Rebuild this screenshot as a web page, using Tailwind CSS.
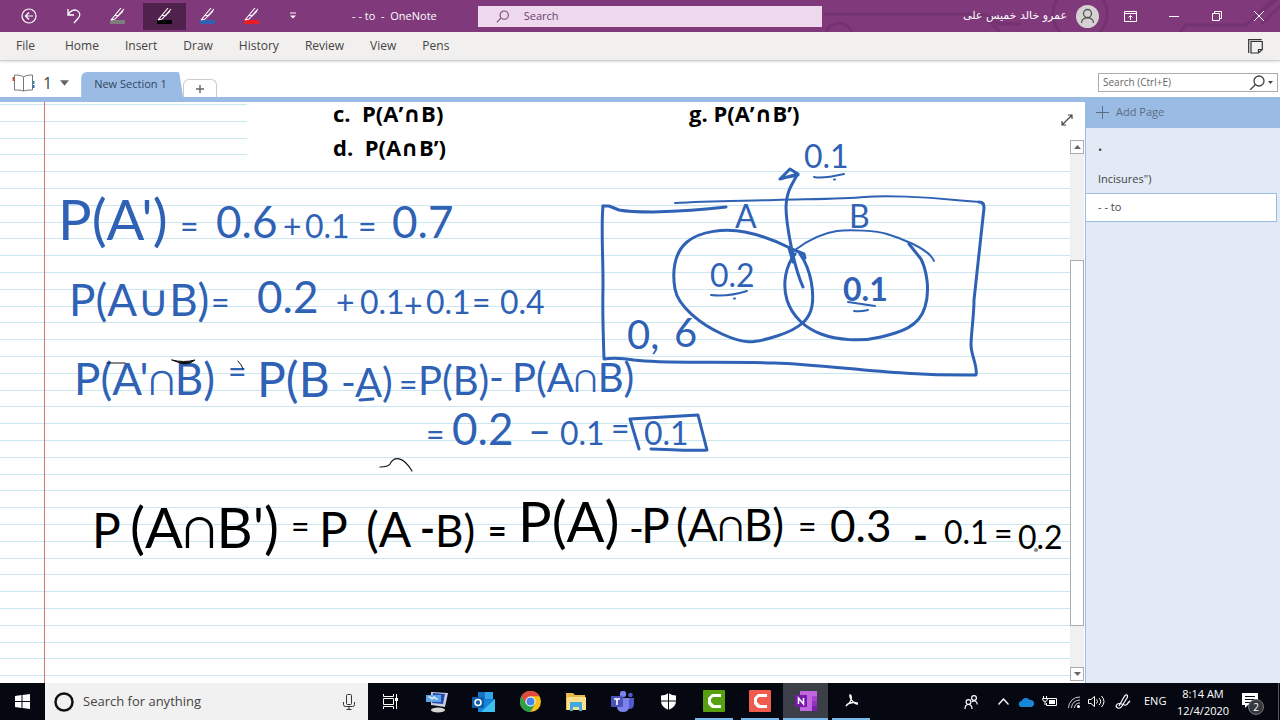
<!DOCTYPE html>
<html lang="en">
  <head>
    <meta charset="UTF-8" />
    <meta name="viewport" content="width=device-width, initial-scale=1.0" />
    <title>- - to - OneNote</title>
    <script src="https://cdn.jsdelivr.net/npm/@tailwindcss/browser@4"></script>
  </head>
  <body class="h-screen flex flex-col overflow-hidden bg-white font-['Open_Sans',sans-serif] text-[12px] text-[#444]">
    <!-- Title bar -->
    <header class="relative h-8 shrink-0 flex items-center bg-[#80397b] text-white">
      <svg class="absolute right-0 top-0 w-[480px] h-8" viewBox="800 0 480 32" fill="none" stroke="#733270" stroke-width="3" aria-hidden="true">
        <path d="M824 14H985l14 10h22M826 32a14 14 0 0 1 26 0M1000 32l-14-14M1180 32l6-7h60l30-25M1252 20l20-20M1262 24l18-18" />
        <circle cx="1080" cy="14" r="27" />
      </svg>
      <nav class="relative flex items-center h-full" aria-label="Quick access">
        <button class="w-[58px] h-7 grid place-items-center" aria-label="Back">
          <svg class="w-4 h-4" viewBox="0 0 16 16" fill="none" stroke="#fff" stroke-width="1.2"><circle cx="8" cy="8" r="7" /><path d="M12 8H4.500M8 4.500L4.500 8L8 11.500" /></svg>
        </button>
        <button class="w-8 h-7 grid place-items-center" aria-label="Undo">
          <svg class="w-4 h-4" viewBox="0 0 16 16" fill="none" stroke="#fff" stroke-width="1.3"><path d="M2 1v6h6M2 7C4 3 8 1 11 2.500s4 5 1 8L8 15" /></svg>
        </button>
        <button class="w-[51px] h-7 ml-[2px] grid place-items-center" aria-label="Gray pen">
          <svg class="w-4 h-4" viewBox="0 0 16 16" fill="none" stroke="#fff" stroke-width="1.1"><rect x="0" y="12" width="15" height="4" fill="#7d7d7d" stroke="none" /><path d="M1 12L11 0M1 12l4-1L14 1M5 7l3 1l5-5" /></svg>
        </button>
        <button class="w-[43px] h-[27px] grid place-items-center bg-[#4f214c]" aria-label="Black pen">
          <svg class="w-4 h-4" viewBox="0 0 16 16" fill="none" stroke="#fff" stroke-width="1.1"><rect x="0" y="12" width="15" height="4" fill="#000" stroke="none" /><path d="M1 12L11 0M1 12l4-1L14 1M5 7l3 1l5-5" /></svg>
        </button>
        <button class="w-[44px] h-7 grid place-items-center" aria-label="Blue pen">
          <svg class="w-4 h-4" viewBox="0 0 16 16" fill="none" stroke="#fff" stroke-width="1.1"><rect x="0" y="12" width="15" height="4" fill="#2f62b5" stroke="none" /><path d="M1 12L11 0M1 12l4-1L14 1M5 7l3 1l5-5" /></svg>
        </button>
        <button class="w-[44px] h-7 grid place-items-center" aria-label="Red pen">
          <svg class="w-4 h-4" viewBox="0 0 16 16" fill="none" stroke="#fff" stroke-width="1.1"><rect x="0" y="12" width="15" height="4" fill="#e81c24" stroke="none" /><path d="M1 12L11 0M1 12l4-1L14 1M5 7l3 1l5-5" /></svg>
        </button>
        <button class="w-[38px] h-7 grid place-items-center" aria-label="Customize toolbar">
          <svg class="w-2 h-2" viewBox="0 0 8 8"><path d="M1 1h6" stroke="#fff" /><path d="M1 3.500h6L4 6.500z" fill="#fff" /></svg>
        </button>
      </nav>
      <h1 class="relative w-[166px] pl-[40px] text-[11px] whitespace-pre">- - to  -  OneNote</h1>
      <label class="relative w-[344px] h-[21px] flex items-center gap-[14px] pl-[18px] bg-[#eed8ee] text-[#6d3f6a]">
        <svg class="w-[15px] h-[15px]" viewBox="0 0 15 15" fill="none" stroke="#7a4777" stroke-width="1.2"><circle cx="9" cy="6" r="4.500" /><path d="M5.500 9L1 14" /></svg>
        <input class="w-full bg-transparent outline-none text-[11px] placeholder:text-[#6d3f6a]" placeholder="Search" aria-label="Search" />
      </label>
      <div class="relative ml-auto flex items-center h-full">
        <span class="text-[11px] font-['DejaVu_Sans',sans-serif] mr-[9px]" dir="rtl" lang="ar">عمرو خالد خميس على</span>
        <svg class="w-[23px] h-[23px] mr-[9px]" viewBox="0 0 23 23" fill="none" stroke="#555" stroke-width="1.3"><circle cx="11.500" cy="11.500" r="11.500" fill="#d6d2d4" stroke="none" /><circle cx="11.500" cy="8.500" r="4" /><path d="M5.500 18c0-7 12-7 12 0" /></svg>
        <button class="w-[44px] h-full grid place-items-center" aria-label="Ribbon display options">
          <svg class="w-[13px] h-[11px]" viewBox="0 0 13 11" fill="none" stroke="#fff"><path d="M.5.500h12v10H.500zM.500 2.500h12M6.500 9V4.500M4.500 6.500l2-2l2 2" /></svg>
        </button>
        <button class="w-[43px] h-full grid place-items-center" aria-label="Minimize">
          <svg class="w-[10px] h-[10px]" viewBox="0 0 10 10" stroke="#fff"><path d="M0 5.500h10" /></svg>
        </button>
        <button class="w-[43px] h-full grid place-items-center" aria-label="Restore">
          <svg class="w-[10px] h-[10px]" viewBox="0 0 10 10" fill="none" stroke="#fff"><path d="M.5 2.500h7v7h-7zM2.500 2.500v-2h7v7h-2" /></svg>
        </button>
        <button class="w-[42px] h-full grid place-items-center" aria-label="Close">
          <svg class="w-[10px] h-[10px]" viewBox="0 0 10 10" stroke="#fff"><path d="M0 0l10 10M10 0L0 10" /></svg>
        </button>
      </div>
    </header>

    <!-- Ribbon tabs -->
    <nav class="h-[29px] shrink-0 flex items-center gap-[26px] pl-4 pr-[17px] bg-[#f1f0ef] border-b border-[#cfcfcf] shadow-sm" aria-label="Ribbon">
      <button>File</button>
      <button class="ml-1">Home</button>
      <button>Insert</button>
      <button>Draw</button>
      <button>History</button>
      <button>Review</button>
      <button>View</button>
      <button>Pens</button>
      <button class="ml-auto" aria-label="Feed">
        <svg class="w-[15px] h-[15px]" viewBox="0 0 15 15" fill="none" stroke="#333" stroke-width="1.200"><path d="M.7 14V.700h13M3 2.500h11.300v8L10.500 14H3zM14.300 10.500h-3.800V14" /></svg>
      </button>
    </nav>

    <!-- Section tabs -->
    <div class="h-9 shrink-0 flex items-end pl-3 pr-[2px]">
      <button class="h-7 flex items-center gap-2 text-[16px]" aria-label="Notebook 1">
        <svg class="w-[23px] h-[18px]" viewBox="0 0 23 18" fill="none" stroke="#777"><path d="M11.500 3C9 1 5 1 2.500 1v15c3 0 6 0 9 1c3-1 6-1 9-1V1c-3 0-6 0-9 2zM11.500 3v14" /><path d="M1.500 3v4" stroke="#c8562b" stroke-width="2" /><path d="M21.500 7v3" stroke="#2b8fa3" stroke-width="2" /><path d="M21.500 11v3" stroke="#3568b8" stroke-width="2" /></svg>
        <span>1</span>
        <svg class="w-[9px] h-[6px]" viewBox="0 0 10 6"><path d="M0 0h10L5 6z" fill="#666" /></svg>
      </button>
      <div class="flex items-end ml-3">
        <button class="w-[102px] h-[25px] pl-[13px] text-left text-[11px] text-[#33475f] bg-[#9abbe4] rounded-t-md [clip-path:polygon(0_0,96%_0,100%_100%,0_100%)]">New Section 1</button>
        <button class="w-[34px] h-[18px] grid place-items-center border border-b-0 border-[#ccc] rounded-t-md" aria-label="Create a new section">
          <svg class="w-[8px] h-[8px]" viewBox="0 0 8 8" stroke="#666" stroke-width="1.400"><path d="M4 0v8M0 4h8" /></svg>
        </button>
      </div>
      <label class="ml-auto mb-[5px] w-[180px] h-[19px] flex items-center px-1 border border-[#ababab]">
        <input class="flex-1 min-w-0 text-[10px] outline-none placeholder:text-[#666]" placeholder="Search (Ctrl+E)" aria-label="Search notebooks" />
        <svg class="w-[24px] h-[15px]" viewBox="0 0 24 15" fill="none" stroke="#444" stroke-width="1.300"><circle cx="10" cy="6" r="5" /><path d="M6.500 9.500L1 15" /><path d="M19 6h5l-2.500 3z" fill="#444" stroke="none" /></svg>
      </label>
    </div>

    <main class="flex-1 min-h-0 flex border-t-[5px] border-[#9abbe4]">
      <!-- Page canvas -->
      <section class="relative flex-1 min-w-0">
        <svg class="absolute inset-0 w-full h-full" aria-hidden="true">
          <defs>
            <pattern id="rules" y="2" width="100" height="84" patternUnits="userSpaceOnUse">
              <path d="M0 .5h100M0 17.500h100M0 34.500h100M0 50.500h100M0 67.500h100" stroke="#cbe8f2" />
            </pattern>
          </defs>
          <rect width="100%" height="100%" fill="url(#rules)" />
          <rect x="247" width="100%" height="64" fill="#fff" />
          <path d="M44.500 0v800" stroke="#d9707e" />
        </svg>

        <div class="absolute left-[333px] top-[-6px] grid grid-cols-[356px_auto] text-[22px] leading-[34px] font-bold text-black font-['Open_Sans','DejaVu_Sans',sans-serif] whitespace-pre">
          <p>c.  P(A’∩B)</p>
          <p>g. P(A’∩B’)</p>
          <p>d.  P(A∩B’)</p>
        </div>

        <!-- Ink layer -->
        <svg class="absolute left-0 top-0 w-[1069px] h-[581px] font-['Lato','DejaVu_Sans',sans-serif]" viewBox="0 102 1069 581">
          <g class="text-[44px]" fill="#2f62b5">
            <text class="text-[56px]" x="58" y="240">P(A')</text>
            <text class="text-[32px]" x="180" y="238">=</text>
            <text x="216" y="238">0.6</text>
            <text class="text-[32px]" x="283" y="238">+</text>
            <text class="text-[32px]" x="305" y="238">0.1</text>
            <text class="text-[32px]" x="358" y="238">=</text>
            <text x="392" y="238">0.7</text>

            <text x="69" y="316">P(A∪B)</text>
            <text class="text-[32px]" x="211" y="314">=</text>
            <text x="257" y="313">0.2</text>
            <text class="text-[32px]" x="336" y="314">+</text>
            <text class="text-[32px]" x="360" y="314">0.1</text>
            <text class="text-[32px]" x="404" y="317">+</text>
            <text class="text-[32px]" x="426" y="314">0.1</text>
            <text class="text-[32px]" x="472" y="314">=</text>
            <text class="text-[32px]" x="500" y="314">0.4</text>

            <text x="74" y="395">P(A'∩B)</text>
            <text class="text-[32px]" x="228" y="383">=</text>
            <text class="text-[48px]" x="257" y="397">P(B</text>
            <text class="text-[40px]" x="341" y="397">-</text>
            <text class="text-[40px]" x="355" y="397">A)</text>
            <text class="text-[32px]" x="399" y="396">=</text>
            <text class="text-[40px]" x="418" y="395">P(B)</text>
            <text class="text-[40px]" x="489" y="392">-</text>
            <text class="text-[40px]" x="512" y="392">P(A∩B)</text>

            <text class="text-[32px]" x="426" y="446">=</text>
            <text x="452" y="445">0.2</text>
            <text class="text-[40px]" x="528" y="445">–</text>
            <text class="text-[32px]" x="560" y="445">0.1</text>
            <text class="text-[32px]" x="611" y="440">=</text>
            <text class="text-[32px]" x="644" y="445">0.1</text>

            <text class="text-[32px]" x="804" y="168">0.1</text>
            <text class="text-[32px]" x="735" y="228">A</text>
            <text class="text-[32px]" x="849" y="228">B</text>
            <text class="text-[32px]" x="710" y="287">0.2</text>
            <text class="text-[32px] font-bold" x="843" y="301">0.1</text>
            <text class="text-[40px]" x="627" y="349">0,</text>
            <text class="text-[40px]" x="674" y="347">6</text>
          </g>

          <g class="text-[48px]" fill="#000">
            <text x="92" y="548">P</text>
            <text class="text-[56px]" x="130" y="548">(A∩B')</text>
            <text class="text-[32px]" x="291" y="538">=</text>
            <text x="319" y="547">P</text>
            <text x="366" y="547">(A</text>
            <text class="text-[40px] font-bold" x="420" y="543">-</text>
            <text class="text-[44px]" x="435" y="547">B)</text>
            <text class="text-[32px] font-bold" x="488" y="543">=</text>
            <text class="text-[56px]" x="518" y="542">P(A)</text>
            <text class="text-[40px]" x="629" y="543">-</text>
            <text x="641" y="543">P</text>
            <text class="text-[44px]" x="676" y="541">(A∩B)</text>
            <text class="text-[32px]" x="798" y="538">=</text>
            <text class="text-[44px]" x="830" y="542">0.3</text>
            <text class="text-[40px] font-bold" x="913" y="550">-</text>
            <text class="text-[32px]" x="944" y="544">0.1</text>
            <text class="text-[32px]" x="994" y="545">=</text>
            <text class="text-[32px]" x="1018" y="549">0.2</text>
          </g>

          <!-- Venn diagram -->
          <g fill="none" stroke="#2f62b5" stroke-width="3" stroke-linecap="round" stroke-linejoin="round">
            <path d="M603 206l6 0l10 4q10 2 34 2q40-1 73-5" />
            <path d="M603 206c-2 20 0 50 0 75s-1 20 1 78q12-2 30 1c30 4 80 1 140 3s120 13 202 12c2-8-5-20-5-30c0-10 3-30 3-45l10-92q0-6-5-6" />
            <path d="M675 203c30-2 60-2 100-3s70-1 90-3s60 0 90 3s29 1 29 6" stroke-width="2" />
            <path d="M790 248c-10-5-25-12-45-16s-45-1-58 10s-15 30-12 47s25 35 47 45s30 10 55 2s33-18 35-30s0-35-12-52" />
            <path d="M795 254c-9 11-13 30-8 46s18 28 34 34s40 8 60 3s38-10 44-30s0-40-4-48l-12-15" />
            <path d="M795 250c12-9 28-17 42-19s40 0 50 3s42 14 47 27" stroke-width="2" />
            <path d="M803 287c-10-22-17-65-17-80s6-22 11-32" />
            <path d="M780 179l18-5l-8-5l-10 10M788 177l10-2M793 262l-4-14l15 6l1 4" />
            <path d="M814 177q8 2 30-3M834 179.500h1M711 295q17 2 36-4M734 298.500h1M848 302l27 4M854 311q6 1 14-1" stroke-width="2" />
            <path d="M639 449l-9-30l68-4l9 35q-10 1-56-1M360 400l13-1" />
          </g>

          <g fill="none" stroke="#111" stroke-linecap="round">
            <path d="M380 467q8 0 10-3c4-8 13-8 22 7" stroke-width="1.200" />
            <path d="M107 363h18M238 361q4 4 5 8" />
            <path d="M172 360q12 3 23 0q-8 6-15 3z" fill="#111" />
          </g>
          <circle cx="1036" cy="550" r="2" fill="#888" />
        </svg>

        <button class="absolute right-[-3px] top-3" aria-label="Full page view">
          <svg class="w-3 h-3" viewBox="0 0 12 12" fill="none" stroke="#444" stroke-width="1.200"><path d="M1 11L11 1M7 1h4v4M1 7v4h4" /></svg>
        </button>
      </section>

      <!-- Scroll bar -->
      <div class="w-[15px] shrink-0 flex flex-col pt-[38px] pr-[1px]">
        <button class="h-[14px] grid place-items-center border border-[#ababab]" aria-label="Scroll up">
          <svg class="w-[7px] h-1" viewBox="0 0 7 4"><path d="M0 4h7L3.500 0z" fill="#666" /></svg>
        </button>
        <div class="flex-1 flex flex-col pt-[106px] pb-[41px] bg-[#f0f0f0]">
          <div class="flex-1 bg-white border border-[#ababab]"></div>
        </div>
        <button class="h-[14px] mb-[2px] grid place-items-center border border-[#ababab]" aria-label="Scroll down">
          <svg class="w-[7px] h-1" viewBox="0 0 7 4"><path d="M0 0h7L3.500 4z" fill="#666" /></svg>
        </button>
      </div>

      <!-- Page list -->
      <aside class="w-[195px] shrink-0 flex flex-col bg-[#e1eaf5] border-l border-[#9abbe4] text-[11px]">
        <button class="h-[26px] pb-[5px] pl-[10px] flex items-center gap-[7px] bg-[#9abbe4] text-[#5b6b80]">
          <svg class="w-[13px] h-[13px]" viewBox="0 0 13 13" stroke="#5b6b80"><path d="M6.500 0v13M0 6.500h13" /></svg>
          Add Page
        </button>
        <a href="#" class="h-[37px] pl-3 pt-2 leading-[28px]">•</a>
        <a href="#" class="h-7 pl-3 leading-[28px]">Incisures")</a>
        <a href="#" class="h-[29px] mr-[3px] pl-3 leading-[26px] bg-white border border-l-0 border-[#9abbe4]">- - to</a>
      </aside>
    </main>

    <!-- Taskbar -->
    <footer class="h-[37px] shrink-0 flex items-stretch bg-[#050811] text-white">
      <button class="w-[45px] grid place-items-center" aria-label="Start">
        <svg class="w-[15px] h-[15px]" viewBox="0 0 15 15" fill="#fff"><path d="M0 2l6.500-1v6H0zM7.500 1L15 0v7H7.500zM0 8h6.500v6L0 13zM7.500 8H15v7l-7.500-1z" /></svg>
      </button>
      <label class="w-[323px] flex items-center gap-[9px] px-[9px] bg-[#f1f1f1] text-[#444]">
        <svg class="w-5 h-5 shrink-0" viewBox="0 0 20 20" fill="none" stroke="#111" stroke-width="2.500"><circle cx="10" cy="10" r="8.500" /></svg>
        <input class="flex-1 min-w-0 outline-none text-[13px] placeholder:text-[#444]" placeholder="Search for anything" aria-label="Search for anything" />
        <svg class="w-[12px] h-[16px] mr-[4px]" viewBox="0 0 12 16" fill="none" stroke="#333"><rect x="3.500" y=".5" width="5" height="10" rx="1" /><path d="M.5 8v2.500q0 2 2 2h7q2 0 2-2V8M6 12.500V15M3.500 15.500h5" /></svg>
      </label>
      <button class="w-[45px] grid place-items-center" aria-label="Task view">
        <svg class="w-[16px] h-[15px]" viewBox="0 0 16 15" fill="none" stroke="#fff"><path d="M.5 0v2.500h10V0M.500 4.500h10v6H.500zM.500 15v-2.500h10V15M13.500 0v15" /><path d="M12 4h3v3h-3z" fill="#fff" stroke="none" /></svg>
      </button>
      <button class="w-[48px] grid place-items-center" aria-label="Remote desktop">
        <svg class="w-6 h-[22px]" viewBox="0 0 24 22"><path d="M6 1l17 1l-3 14l-14-2z" fill="#c9cfdd" /><path d="M8 2l12 1l-2 10l-11-1z" fill="#2947b0" /><path d="M1 4h15v7H1z" fill="#5ba4e6" /><path d="M3 6h3v2h2V6h2v2h3" stroke="#fff" fill="none" /><ellipse cx="13" cy="19" rx="7" ry="2.500" fill="#d6d6d6" /></svg>
      </button>
      <button class="w-[45px] grid place-items-center" aria-label="Outlook">
        <svg class="w-[23px] h-[20px]" viewBox="0 0 23 20"><path d="M6 0h15v14H6z" fill="#1a73c9" /><path d="M13 0h8v7h-8z" fill="#33a5ea" /><path d="M6 9l17-2v13H6z" fill="#1583d6" /><path d="M23 7L9 20h14z" fill="#3cc1f0" /><rect y="5" width="12" height="11" fill="#0f5ca8" /><circle cx="6" cy="10.500" r="3" fill="none" stroke="#fff" stroke-width="1.600" /></svg>
      </button>
      <button class="w-[48px] grid place-items-center" aria-label="Chrome">
        <svg class="w-[21px] h-[21px]" viewBox="0 0 21 21"><circle cx="10.500" cy="10.500" r="10.500" fill="#fbc116" /><path d="M1.400 5.200A10.500 10.500 0 0 1 19.600 5.200H10.500L6 13z" fill="#dd4b3e" /><path d="M1.400 5.200A10.500 10.500 0 0 0 10.500 21L15 13H6z" fill="#2b9f4d" /><circle cx="10.500" cy="10.500" r="5" fill="#fff" /><circle cx="10.500" cy="10.500" r="4" fill="#4384f0" /></svg>
      </button>
      <button class="w-[44px] grid place-items-center" aria-label="File Explorer">
        <svg class="w-[20px] h-[18px]" viewBox="0 0 20 18"><path d="M0 0h7l2 2h10v15H0z" fill="#e9b949" /><path d="M1 4h19v13H1z" fill="#fbe08b" /><path d="M4 9h12v9h-3v-4H7v4H4z" fill="#41a9e0" /></svg>
      </button>
      <button class="w-[48px] grid place-items-center" aria-label="Teams">
        <svg class="w-[23px] h-[21px]" viewBox="0 0 23 21"><circle cx="12" cy="3" r="3.200" fill="#7b83eb" /><circle cx="19.500" cy="4" r="2.300" fill="#5059c9" /><path d="M15 7h8v6q0 5-5 5h-3z" fill="#5059c9" /><path d="M6 7h12v8q0 6-6 6t-6-6z" fill="#7b83eb" /><rect y="5" width="12" height="11" rx="1" fill="#4b53bc" /><path d="M3 8h6M6 8v6" stroke="#fff" stroke-width="1.600" /></svg>
      </button>
      <button class="w-[44px] grid place-items-center" aria-label="Windows Security">
        <svg class="w-[15px] h-[17px]" viewBox="0 0 15 17"><path d="M7.500 0Q11 2.500 15 2.500V8q0 6-7.500 9Q0 14 0 8V2.500Q4 2.500 7.500 0z" fill="#fff" /><path d="M7.500 0v17M0 8h15" stroke="#050811" /></svg>
      </button>
      <button class="w-[38px] ml-[5px] grid place-items-center border-b-2 border-[#76b9ed]" aria-label="Camtasia">
        <svg class="w-[22px] h-[22px]" viewBox="0 0 22 22"><rect width="22" height="22" rx="1" fill="#57a010" /><path d="M18 4H9L5 8v6l4 4h9v-3h-7l-3-3V9l2-2h8z" fill="#fff" /></svg>
      </button>
      <button class="w-[38px] ml-2 grid place-items-center border-b-2 border-[#76b9ed]" aria-label="Camtasia Recorder">
        <svg class="w-[22px] h-[22px]" viewBox="0 0 22 22"><rect width="22" height="22" rx="1" fill="#f15b4e" /><path d="M18 4H9L5 8v6l4 4h9v-3h-7l-3-3V9l2-2h8z" fill="#fff" /></svg>
      </button>
      <button class="w-[45px] ml-1 grid place-items-center bg-[#3c3e48] border-b-2 border-[#76b9ed]" aria-label="OneNote">
        <svg class="w-[22px] h-[20px]" viewBox="0 0 22 20"><path d="M5 0h17v20H5z" fill="#c067e0" /><path d="M17 5h5v5h-5z" fill="#a743cf" /><path d="M17 10h5v5h-5z" fill="#9332bf" /><path d="M17 15h5v5h-5z" fill="#7a1fa6" /><rect y="4" width="12" height="12" fill="#7719aa" /><path d="M3.500 13V7l5 6V7" fill="none" stroke="#fff" stroke-width="1.500" /></svg>
      </button>
      <button class="w-[38px] ml-1 grid place-items-center border-b-2 border-[#76b9ed]" aria-label="Acrobat">
        <svg class="w-[13px] h-[13px]" viewBox="0 0 13 13" fill="none" stroke="#fff" stroke-width="1.300"><path d="M1 12C5 9 7 5 6 2s-2 0 0 3s4 5 6 5s0-2-4-1.500S2 10 1 12z" /></svg>
      </button>

      <!-- System tray -->
      <div class="ml-auto flex items-center">
        <svg class="w-[14px] h-[14px] mr-[20px]" viewBox="0 0 14 14" fill="none" stroke="#fff" stroke-width="1.200"><circle cx="10" cy="3" r="2.400" /><circle cx="4.500" cy="7" r="2.400" /><path d="M1 14c0-6 7-6 7 0M8 6.500c3-1.500 5 0 5.300 3" /></svg>
        <svg class="w-[11px] h-[7px] mr-[10px]" viewBox="0 0 11 7" fill="none" stroke="#fff" stroke-width="1.300"><path d="M.500 6.500l5-5.500l5 5.500" /></svg>
        <svg class="w-[15px] h-[10px] mr-[8px]" viewBox="0 0 15 10"><path d="M3 10a3 3 0 0 1-.5-6A5 5 0 0 1 11 3a3.500 3.500 0 0 1 1 7z" fill="#1987d9" /></svg>
        <svg class="w-[15px] h-[11px] mr-[11px]" viewBox="0 0 15 11" fill="none" stroke="#fff"><path d="M5 2.500h9.500v7h-10V7M1.500 0v2M4.500 0v2M.500 2.500h5q0 3-2.500 3t-2.500-3M3 5.500V9" /><path d="M7 4h6v4H7z" fill="#fff" stroke="none" /></svg>
        <svg class="w-[12px] h-[12px] mr-2" viewBox="0 0 12 12" fill="none" stroke="#ccc"><path d="M.500 12A11 11 0 0 1 12 1M3.500 12A8 8 0 0 1 12 4M6.500 12A5 5 0 0 1 12 7" /><circle cx="10.500" cy="10.500" r="1.500" fill="#fff" stroke="none" /></svg>
        <svg class="w-[17px] h-[13px] mr-[10px]" viewBox="0 0 17 13" fill="none" stroke="#fff"><path d="M.500 4.500h2.500L6.500 1.500v10L3 8.500H.500zM8.500 4.500q2 2 0 4M11 3q3.500 3.500 0 7M13.500 1q5 5.500 0 11" /></svg>
        <svg class="w-[16px] h-[15px] mr-[13px]" viewBox="0 0 16 15" fill="none" stroke="#fff" stroke-width="1.200"><path d="M4 12L9 3q2-3 3-2t0 3L7 12q-2 3-4 2c-3-1-2-4 1-4.500c4 0 4 2 7 1.500s1-3 4-4l-3 3" /></svg>
        <span class="w-[22px] text-[11px]">ENG</span>
        <time class="ml-3 w-[50px] text-[11px] leading-[17px] whitespace-nowrap flex flex-col items-center">
          <span>8:14 AM</span>
          <span>12/4/2020</span>
        </time>
        <button class="relative ml-[14px] mr-[14px] w-[22px] h-6" aria-label="Notifications">
          <svg class="absolute left-0 top-[3px] w-4 h-[15px]" viewBox="0 0 16 15"><path d="M0 0h16v12H6l-3 3v-3H0z" fill="#fff" /><path d="M3 3.500h10M3 6.500h10M3 9.500h6" stroke="#050811" /></svg>
          <span class="absolute right-0 bottom-[-1px] w-4 h-4 rounded-full bg-[#35383f] border border-[#777] text-[10px] leading-[14px]">2</span>
        </button>
        <div class="w-px h-full mr-[1px] bg-[#555]"></div>
      </div>
    </footer>
  </body>
</html>
